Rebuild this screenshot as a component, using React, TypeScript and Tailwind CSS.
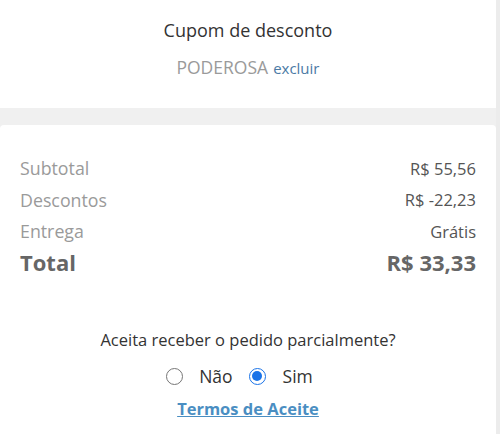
import React from "react";

function Radio({ checked }: { checked: boolean }) {
  return (
    <span
      className={
        "inline-flex h-[17px] w-[17px] items-center justify-center rounded-full border " +
        (checked ? "border-[#1a73e8]" : "border-[#767676]")
      }
    >
      {checked && <span className="h-[10px] w-[10px] rounded-full bg-[#1a73e8]" />}
    </span>
  );
}

export default function App() {
  return (
    <div className="flex h-[434px] w-[500px] bg-[#f0f0f0] font-['Open_Sans',sans-serif]">
      <div className="flex w-[496px] flex-col">
        <div className="flex h-[108px] flex-col items-center bg-white pt-[17px]">
          <div className="text-[18px] leading-[26px] text-[#333]">Cupom de desconto</div>
          <div className="mt-[12px] flex items-baseline gap-[5px]">
            <span className="text-[17.5px] leading-[24px] text-[#9a9a9a]">PODEROSA</span>
            <span className="text-[15px] text-[#4b7aa5]">excluir</span>
          </div>
        </div>
        <div className="h-[17px]" />
        <div className="flex flex-1 flex-col rounded-t-[4px] bg-white px-[20px] pt-[28px]">
          <div className="flex justify-between text-[17.8px] leading-[31px]">
            <span className="text-[#9a9a9a]">Subtotal</span>
            <span className="text-[16.5px] text-[#555]">R$ 55,56</span>
          </div>
          <div className="flex justify-between text-[17.8px] leading-[32px]">
            <span className="text-[#9a9a9a]">Descontos</span>
            <span className="text-[16.5px] text-[#555]">R$ -22,23</span>
          </div>
          <div className="flex justify-between text-[17.8px] leading-[31px]">
            <span className="text-[#9a9a9a]">Entrega</span>
            <span className="text-[16.5px] text-[#555]">Grátis</span>
          </div>
          <div className="flex justify-between text-[22px] font-bold leading-[31px] text-[#666]">
            <span>Total</span>
            <span>R$ 33,33</span>
          </div>
          <div className="mt-[50px] flex flex-col items-center">
            <div className="text-[16.5px] leading-[24px] text-[#333]">Aceita receber o pedido parcialmente?</div>
            <div className="mt-[11px] flex h-[26px] items-center pr-[17px] text-[17.5px] leading-[26px] text-[#333]">
              <Radio checked={false} />
              <span className="ml-[16px]">Não</span>
              <span className="ml-[16px] inline-flex"><Radio checked /></span>
              <span className="ml-[17px]">Sim</span>
            </div>
            <a className="mt-[8px] text-[16.5px] font-bold leading-[24px] text-[#4a8ec2] underline">
              Termos de Aceite
            </a>
          </div>
        </div>
      </div>
      <div className="w-[4px] bg-[#ececec]" />
    </div>
  );
}
